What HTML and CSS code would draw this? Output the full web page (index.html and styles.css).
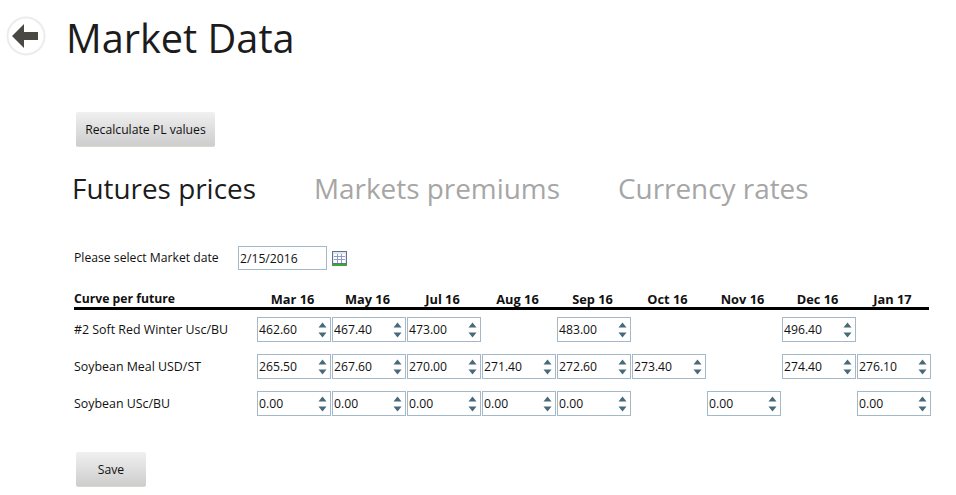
FILE: index.html
```html
<!DOCTYPE html>
<html lang="en">
<head>
    <meta charset="UTF-8">
    <title>Market Data</title>
    <link rel="stylesheet" href="styles.css">
</head>
<body>
    <svg width="0" height="0" class="defs">
        <symbol id="spin" viewBox="0 0 11 22">
            <path d="M5.5 3.5 L9.5 8.5 H1.5 Z" fill="#47697a"/>
            <path d="M1.5 13.5 H9.5 L5.5 18.5 Z" fill="#47697a"/>
        </symbol>
    </svg>

    <header class="top">
        <svg class="back" width="40" height="40" viewBox="0 0 40 40">
            <circle cx="20" cy="20" r="18.5" fill="#fff" stroke="#ececec" stroke-width="2"/>
            <path d="M6 20 L18 8 V16 H32 V24 H18 V32 Z" fill="#4a4843"/>
        </svg>
        <h1>Market Data</h1>
    </header>

    <main class="content">
        <button class="btn recalc" type="button">Recalculate PL values</button>

        <nav class="tabs">
            <span class="tab active">Futures prices</span>
            <span class="tab">Markets premiums</span>
            <span class="tab">Currency rates</span>
        </nav>

        <div class="date-row">
            <label>Please select Market date</label>
            <input class="date" type="text" value="2/15/2016">
            <svg class="cal" width="15" height="15" viewBox="0 0 15 15">
                <rect x="0.5" y="0.5" width="14" height="12" fill="#dfe6f2" stroke="#66718c"/>
                <rect x="2" y="3" width="11" height="9" fill="#fff"/>
                <path d="M2 5.5 H13 M2 8.5 H13 M5.5 3 V12 M9.5 3 V12" stroke="#8f9cc4" stroke-width="1"/>
                <rect x="0" y="13" width="15" height="2" fill="#3aa63a"/>
            </svg>
        </div>

        <div class="prices">
            <div class="head first">Curve per future</div>
            <div class="head">Mar 16</div>
            <div class="head">May 16</div>
            <div class="head">Jul 16</div>
            <div class="head">Aug 16</div>
            <div class="head">Sep 16</div>
            <div class="head">Oct 16</div>
            <div class="head">Nov 16</div>
            <div class="head">Dec 16</div>
            <div class="head">Jan 17</div>
            <div class="rule"></div>

            <div class="name">#2 Soft Red Winter Usc/BU</div>
            <div class="spinner"><span>462.60</span><svg width="11" height="22"><use href="#spin"/></svg></div>
            <div class="spinner"><span>467.40</span><svg width="11" height="22"><use href="#spin"/></svg></div>
            <div class="spinner"><span>473.00</span><svg width="11" height="22"><use href="#spin"/></svg></div>
            <div></div>
            <div class="spinner"><span>483.00</span><svg width="11" height="22"><use href="#spin"/></svg></div>
            <div></div>
            <div></div>
            <div class="spinner"><span>496.40</span><svg width="11" height="22"><use href="#spin"/></svg></div>
            <div></div>

            <div class="name">Soybean Meal USD/ST</div>
            <div class="spinner"><span>265.50</span><svg width="11" height="22"><use href="#spin"/></svg></div>
            <div class="spinner"><span>267.60</span><svg width="11" height="22"><use href="#spin"/></svg></div>
            <div class="spinner"><span>270.00</span><svg width="11" height="22"><use href="#spin"/></svg></div>
            <div class="spinner"><span>271.40</span><svg width="11" height="22"><use href="#spin"/></svg></div>
            <div class="spinner"><span>272.60</span><svg width="11" height="22"><use href="#spin"/></svg></div>
            <div class="spinner"><span>273.40</span><svg width="11" height="22"><use href="#spin"/></svg></div>
            <div></div>
            <div class="spinner"><span>274.40</span><svg width="11" height="22"><use href="#spin"/></svg></div>
            <div class="spinner"><span>276.10</span><svg width="11" height="22"><use href="#spin"/></svg></div>

            <div class="name">Soybean USc/BU</div>
            <div class="spinner"><span>0.00</span><svg width="11" height="22"><use href="#spin"/></svg></div>
            <div class="spinner"><span>0.00</span><svg width="11" height="22"><use href="#spin"/></svg></div>
            <div class="spinner"><span>0.00</span><svg width="11" height="22"><use href="#spin"/></svg></div>
            <div class="spinner"><span>0.00</span><svg width="11" height="22"><use href="#spin"/></svg></div>
            <div class="spinner"><span>0.00</span><svg width="11" height="22"><use href="#spin"/></svg></div>
            <div></div>
            <div class="spinner"><span>0.00</span><svg width="11" height="22"><use href="#spin"/></svg></div>
            <div></div>
            <div class="spinner"><span>0.00</span><svg width="11" height="22"><use href="#spin"/></svg></div>
        </div>

        <button class="btn save" type="button">Save</button>
    </main>
</body>
</html>
```

FILE: styles.css
```css
html, body { margin: 0; height: 495px; overflow: hidden; }
body { font-family: "Open Sans", "Noto Sans", sans-serif; background: #fff; color: #111; font-size: 12.2px; }
.defs { display: block; height: 0; }

.top { display: flex; align-items: center; height: 76px; padding-left: 6px; }
.back { flex: none; margin-top: -4px; }
h1 { margin: 0 0 0 20px; font-size: 39.7px; font-weight: 400; line-height: 54px; color: #1c1c1c; }

.content { padding-left: 74px; }

.btn { display: block; font: inherit; color: #111; border: none; border-bottom: 1px solid #d8d8cc; border-radius: 2px; background: linear-gradient(#f0f0f0, #cdcdcd); padding: 0; }
.recalc { width: 139px; height: 35px; margin: 36px 0 0 2px; }
.save { width: 70px; height: 35px; margin: 24px 0 0 2px; }

.tabs { display: flex; gap: 58px; margin: 21px 0 0 -2px; height: 40px; }
.tab { font-size: 27.9px; line-height: 40px; color: #a6a6a6; }
.tab.active { color: #1c1c1c; }

.date-row { display: flex; align-items: center; margin-top: 38px; height: 24px; }
.date-row label { width: 164px; padding-bottom: 2px; }
.date { width: 89px; height: 24px; box-sizing: border-box; border: 1px solid #a3b8c8; padding: 0 0 0 1px; font: inherit; color: #111; outline: none; }
.cal { margin-left: 5px; }

.prices { display: grid; grid-template-columns: 183px repeat(9, 75px); grid-template-rows: 18px 10px 37px 37px 37px; width: 858px; margin-top: 19px; }
.head { line-height: 20px; font-size: 12.8px; font-weight: 700; text-align: center; padding-right: 4px; white-space: nowrap; }
.head.first { font-size: 12.2px; text-align: left; }
.rule { grid-column: 1 / -1; height: 3px; width: 855px; background: #000; }
.name { display: flex; align-items: center; height: 25px; font-size: 12.4px; }
.spinner { display: flex; align-items: center; justify-content: space-between; box-sizing: border-box; width: 74px; height: 25px; border: 1px solid #a3b8c8; padding: 0 2px 0 1px; }
```
